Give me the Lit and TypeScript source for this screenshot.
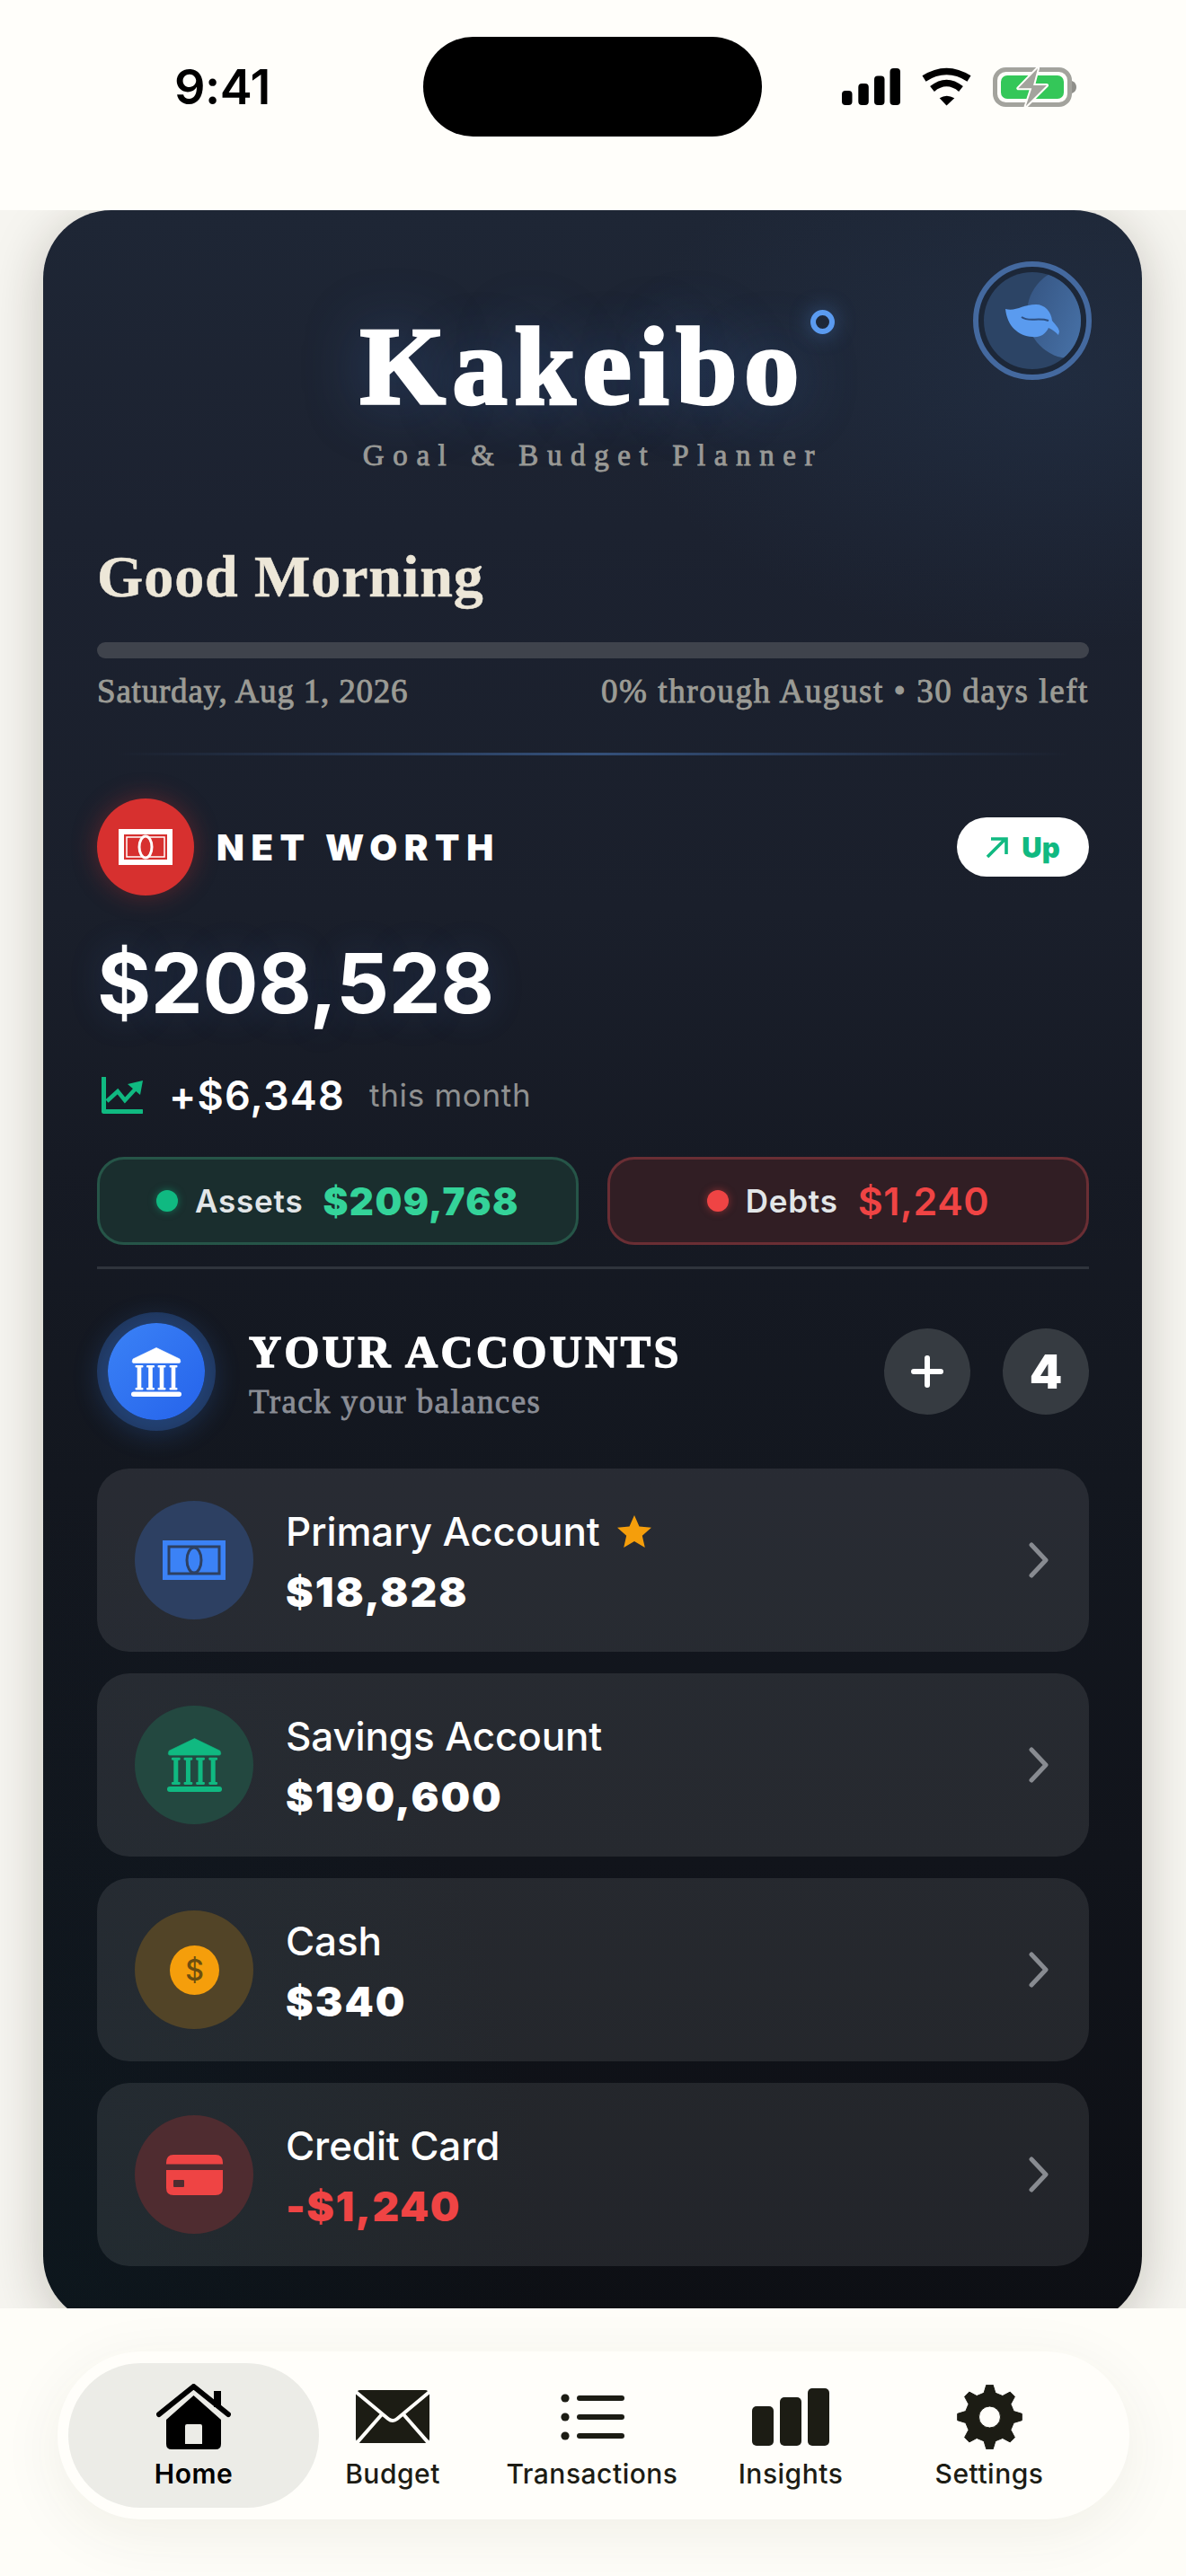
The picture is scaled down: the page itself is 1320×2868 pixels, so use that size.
import { LitElement, html, css, svg } from "lit";
import { customElement } from "lit/decorators.js";

function gearPath(): string {
  const cx = 36.5, cy = 36, teeth = 8, ro = 36, ri = 27.5;
  const pts: string[] = [];
  for (let k = 0; k < teeth; k++) {
    const a = (k * 2 * Math.PI) / teeth - Math.PI / 2;
    const step = (2 * Math.PI) / teeth;
    const seq: [number, number][] = [
      [a - step * 0.3, ri],
      [a - step * 0.13, ro],
      [a + step * 0.13, ro],
      [a + step * 0.3, ri],
    ];
    for (const [t, r] of seq) {
      pts.push(`${(cx + r * Math.cos(t)).toFixed(2)} ${(cy + r * Math.sin(t)).toFixed(2)}`);
    }
  }
  return `M${pts.join("L")}Z M${cx - 12} ${cy}a12 12 0 1 0 24 0a12 12 0 1 0 -24 0Z`;
}

const bank = (w: number, h: number) => html`<svg class="bank" width=${w} height=${h} viewBox="0 0 56 55" fill="currentColor">
  <path d="M28 0.5 L54 13 Q56 17.5 53 17.5 H3 Q0 17.5 2 13 Z" stroke="currentColor" stroke-width="0.6" stroke-linejoin="round"/>
  ${[5, 17.5, 30, 43].map(
    (x) => svg`<rect x=${x - 0.5} y="20" width="9" height="2.6" rx="1"/><rect x=${x + 1.7} y="21.5" width="4.6" height="25"/><rect x=${x - 0.5} y="45" width="9" height="2.6" rx="1"/>`
  )}
  <rect x="0" y="49.5" width="56" height="5.5" rx="2.75"/>
</svg>`;

const note = (cls: string) => html`<svg class="note ${cls}" width="70" height="44" viewBox="0 0 70 44">
  <rect class="n-a" width="70" height="44"/>
  <rect class="n-b" x="7" y="7" width="56" height="30" fill="none" stroke-width="3"/>
  <ellipse class="n-b" cx="35" cy="22" rx="8" ry="14" fill="none" stroke-width="3"/>
</svg>`;

const coin = html`<svg width="55" height="55" viewBox="0 0 55 55">
  <circle cx="27.5" cy="27.5" r="27.5" fill="#f59e0b"/>
  <text x="27.5" y="38.5" text-anchor="middle" class="coin-t">$</text>
</svg>`;

const cardIcon = html`<svg width="63" height="45" viewBox="0 0 63 45" fill="#ef4444">
  <path d="M0 9 Q0 0 8 0 H55 Q63 0 63 9 V10.5 H0Z"/>
  <path fill-rule="evenodd" d="M0 17 H63 V37 Q63 45 55 45 H8 Q0 45 0 37Z M9 28 Q8 28 8 29 V35 Q8 36 9 36 H19 Q20 36 20 35 V29 Q20 28 19 28Z"/>
</svg>`;

const accounts = [
  { name: "Primary Account", value: "$18,828", tone: "blue", star: true, icon: note("n-blue"), neg: false },
  { name: "Savings Account", value: "$190,600", tone: "green", star: false, icon: bank(61, 60), neg: false },
  { name: "Cash", value: "$340", tone: "amber", star: false, icon: coin, neg: false },
  { name: "Credit Card", value: "-$1,240", tone: "red", star: false, icon: cardIcon, neg: true },
];

const tabs = [
  {
    label: "Home",
    active: true,
    icon: html`<svg width="83" height="73" viewBox="0 0 83 73">
      <path d="M3 34 L41.5 3 L80 34" fill="none" stroke="#000" stroke-width="6" stroke-linecap="round" stroke-linejoin="round"/>
      <rect x="64" y="8" width="8" height="18" fill="#000"/>
      <path fill="#000" fill-rule="evenodd" d="M41.5 13 L72 40 V67 Q72 73 66 73 H17 Q11 73 11 67 V40 Z M34 45 Q32 45 32 47 V67 H51 V47 Q51 45 49 45Z"/>
    </svg>`,
  },
  {
    label: "Budget",
    active: false,
    icon: html`<svg width="82" height="59" viewBox="0 0 82 59">
      <rect width="82" height="59" rx="5" fill="#1c1c14"/>
      <path d="M0 2 L36 32 Q41 36 46 32 L82 2 M1 59 L29 27 M81 59 L53 27" fill="none" stroke="#fffefa" stroke-width="4"/>
    </svg>`,
  },
  {
    label: "Transactions",
    active: false,
    icon: html`<svg width="71" height="52" viewBox="0 0 71 52" fill="#1c1c14">
      ${[5, 26, 47].map(
        (y) => svg`<circle cx="5" cy=${y} r="4.6"/><rect x="18" y=${y - 3} width="53" height="6" rx="3"/>`
      )}
    </svg>`,
  },
  {
    label: "Insights",
    active: false,
    icon: html`<svg width="86" height="64" viewBox="0 0 86 64" fill="#1c1c14">
      <rect x="0" y="20" width="24" height="44" rx="5"/>
      <rect x="31" y="10" width="24" height="54" rx="5"/>
      <rect x="62" y="0" width="24" height="64" rx="5"/>
    </svg>`,
  },
  {
    label: "Settings",
    active: false,
    icon: html`<svg width="73" height="72" viewBox="0 0 73 72"><path d=${gearPath()} fill="#1c1c14" fill-rule="evenodd" stroke="#1c1c14" stroke-width="1" stroke-linejoin="round"/></svg>`,
  },
];

@customElement("app-root")
export class AppRoot extends LitElement {
  static styles = css`
    :host {
      display: block;
      width: 1320px;
      height: 2868px;
      background: #fffefa;
      font-family: Inter, "Liberation Sans", sans-serif;
      overflow: hidden;
    }
    .status {
      height: 234px;
      box-sizing: border-box;
      padding-top: 41px;
      display: grid;
      grid-template-columns: 471px 377px 472px;
      align-items: start;
    }
    .status-l, .status-r { height: 111px; display: flex; align-items: center; }
    .time { padding-left: 194px; font-size: 54px; font-weight: 600; color: #000; letter-spacing: -0.5px; }
    .island { height: 111px; border-radius: 56px; background: #000; }
    .status-r { padding-left: 89px; gap: 23px; }
    .scroll {
      height: 2336px;
      overflow: hidden;
      box-sizing: border-box;
      padding-left: 48px;
      background: #f6f5f0;
    }
    .card {
      position: relative;
      width: 1223px;
      box-sizing: border-box;
      padding: 113px 59px 65px 60px;
      border-radius: 76px;
      color: #fff;
      background:
        radial-gradient(700px 420px at 92% 8%, rgba(50, 85, 130, 0.16), transparent 70%),
        radial-gradient(800px 1300px at 0% 100%, rgba(14, 40, 50, 0.3), transparent 70%),
        linear-gradient(180deg, #1e2635 0%, #1c2230 15%, #1a1f2b 33%, #161a24 45%, #13171f 60%, #11141b 78%, #0d0f14 100%);
      box-shadow: 0 10px 60px rgba(30, 25, 10, 0.22);
    }
    .leaf { position: absolute; left: 1035px; top: 57px; width: 132px; height: 132px; }
    .head { display: flex; flex-direction: column; align-items: center; }
    .title {
      position: relative;
      margin-right: 22px;
      font-family: "Liberation Serif", serif;
      font-weight: 700;
      font-size: 122px;
      line-height: 122px;
      letter-spacing: 8px;
      -webkit-text-stroke: 3.5px #fff;
      text-shadow: 0 0 70px rgba(70, 130, 220, 0.38);
    }
    .ringdot {
      position: absolute;
      right: -32px;
      top: -2px;
      width: 27px;
      height: 27px;
      box-sizing: border-box;
      border: 6px solid #5b9bf0;
      border-radius: 50%;
      box-shadow: 0 0 24px rgba(91, 155, 240, 0.4);
    }
    .sub {
      margin-top: 18px;
      font-family: "Liberation Serif", serif;
      font-size: 33px;
      line-height: 40px;
      font-weight: 400;
      -webkit-text-stroke: 0.9px #9a9a96;
      letter-spacing: 9.6px;
      color: #9a9a96;
    }
    .greet {
      margin-top: 75px;
      font-family: "Liberation Serif", serif;
      font-size: 66px;
      line-height: 80px;
      font-weight: 700;
      letter-spacing: 0.9px;
      -webkit-text-stroke: 0.5px #ede7d8;
      color: #ede7d8;
    }
    .bar { margin-top: 33px; height: 18px; border-radius: 9px; background: #3f434c; }
    .daterow {
      margin-top: 15px;
      display: flex;
      justify-content: space-between;
      font-family: "Liberation Serif", serif;
      font-size: 37px;
      line-height: 44px;
      font-weight: 400;
      -webkit-text-stroke: 0.9px #9b9b95;
      color: #9b9b95;
    }
    .d-l { letter-spacing: 0.8px; }
    .d-r { letter-spacing: 1.6px; }
    .fade {
      margin: 46px 0 0;
      height: 3px;
      background: linear-gradient(90deg, transparent 2%, #34507a 50%, transparent 98%);
    }
    .nw { margin-top: 48px; height: 108px; display: flex; align-items: center; }
    .nw-badge {
      width: 108px;
      height: 108px;
      border-radius: 50%;
      background: #d7302f;
      box-shadow: 0 0 28px rgba(215, 48, 47, 0.35);
      display: flex;
      align-items: center;
      justify-content: center;
      flex: none;
    }
    .nw-label {
      margin-left: 25px;
      font-size: 40px;
      font-weight: 900;
      letter-spacing: 7.6px;
      color: #fff;
      flex: 1;
    }
    .up {
      width: 147px;
      height: 66px;
      border-radius: 33px;
      background: #fff;
      display: flex;
      align-items: center;
      justify-content: center;
      gap: 15px;
      color: #10b981;
      font-size: 31px;
      font-weight: 900;
    }
    .amount {
      margin-top: 48px;
      font-size: 92px;
      line-height: 100px;
      font-weight: 700;
      letter-spacing: -0.4px;
      text-shadow: 0 0 40px rgba(70, 130, 220, 0.18);
    }
    .trend { margin-top: 52px; height: 44px; display: flex; align-items: center; padding-left: 5px; }
    .trend-v { margin-left: 29px; font-size: 45px; font-weight: 600; letter-spacing: 1.2px; }
    .trend-s { margin-left: 27px; font-size: 35px; color: #8f9090; letter-spacing: 0.7px; }
    .pills { margin-top: 47px; display: grid; grid-template-columns: 536px 536px; gap: 32px; }
    .pill {
      height: 98px;
      box-sizing: border-box;
      border-radius: 30px;
      border: 3px solid;
      display: flex;
      align-items: center;
      justify-content: center;
    }
    .pill.g { background: #1a2e2e; border-color: #265548; }
    .pill.r { background: #311e24; border-color: #6a2e34; }
    .dot { width: 24px; height: 24px; border-radius: 50%; }
    .g .dot { background: #10b981; box-shadow: 0 0 8px rgba(16, 185, 129, 0.5); }
    .r .dot { background: #ef4444; box-shadow: 0 0 8px rgba(239, 68, 68, 0.5); }
    .pill-l { margin-left: 19px; font-size: 35px; font-weight: 600; color: #e2e6e8; letter-spacing: 0.8px; }
    .pill-v { margin-left: 22px; }
    .g .pill-v { color: #34d399; font-size: 42px; font-weight: 900; letter-spacing: 1.4px; }
    .r .pill-v { color: #ef4444; font-size: 43px; font-weight: 600; letter-spacing: 0.6px; }
    .rule { margin-top: 24px; height: 3px; background: #2f343c; }
    .ah { margin-top: 48px; height: 132px; display: flex; align-items: center; }
    .ah-ic {
      width: 108px;
      height: 108px;
      margin: 12px;
      flex: none;
      border-radius: 50%;
      background: linear-gradient(135deg, #3b82f6, #2563eb);
      box-shadow: 0 0 0 12px rgba(59, 130, 246, 0.25), 0 6px 30px 10px rgba(59, 130, 246, 0.22);
      display: flex;
      align-items: center;
      justify-content: center;
      color: #fff;
    }
    .ah-t { margin-left: 37px; flex: 1; padding-top: 3px; }
    .ah-1 {
      font-family: "Liberation Serif", serif;
      font-size: 50px;
      line-height: 56px;
      font-weight: 700;
      letter-spacing: 3.4px;
      -webkit-text-stroke: 1.5px #fff;
    }
    .ah-2 {
      margin-top: 8px;
      font-family: "Liberation Serif", serif;
      font-size: 37px;
      line-height: 40px;
      font-weight: 400;
      -webkit-text-stroke: 0.8px #8a8d95;
      letter-spacing: 1.4px;
      color: #8a8d95;
    }
    .round {
      width: 96px;
      height: 96px;
      border-radius: 50%;
      background: #363b41;
      display: flex;
      align-items: center;
      justify-content: center;
      font-size: 52px;
      font-weight: 900;
    }
    .round + .round { margin-left: 36px; }
    .rows { margin-top: 42px; display: flex; flex-direction: column; gap: 24px; }
    .row {
      height: 204px;
      box-sizing: border-box;
      padding: 0 44px 0 42px;
      border-radius: 36px;
      background: rgba(255, 255, 255, 0.09);
      display: flex;
      align-items: center;
    }
    .ric {
      width: 132px;
      height: 132px;
      border-radius: 50%;
      flex: none;
      display: flex;
      align-items: center;
      justify-content: center;
    }
    .ric.blue { background: #2d4062; }
    .ric.green { background: #234840; color: #10b981; }
    .ric.amber { background: #524427; }
    .ric.red { background: #4f2c30; }
    .rt { margin-left: 36px; flex: 1; padding-top: 3px; }
    .rn { font-size: 44px; line-height: 56px; font-weight: 500; display: flex; align-items: center; gap: 19px; letter-spacing: -0.15px; }
    .rv { margin-top: 11px; font-size: 46px; line-height: 56px; font-weight: 900; letter-spacing: 2px; }
    .rv.neg { color: #ef4444; letter-spacing: 1.5px; }
    .note .n-a { fill: #3b82f6; }
    .note .n-b { stroke: #2d4062; }
    .coin-t { font-family: Inter, sans-serif; font-size: 32px; font-weight: 500; fill: #6b4e10; }
    .bottom { height: 298px; box-sizing: border-box; padding: 48px 63px 0 64px; background: #fefdf8; }
    .nav {
      height: 187px;
      box-sizing: border-box;
      padding: 13px 12px;
      border-radius: 94px;
      background: #fffefa;
      box-shadow: 0 16px 70px rgba(60, 50, 20, 0.07);
      display: grid;
      grid-template-columns: 279px 164px 280px 162px 280px;
      color: #1c1c14;
    }
    .tab {
      height: 161px;
      box-sizing: border-box;
      padding-top: 23px;
      border-radius: 81px;
      display: flex;
      flex-direction: column;
      align-items: center;
    }
    .tab.on { background: #ecece7; color: #000; }
    .tab-i { height: 73px; display: flex; align-items: center; }
    .tab-l { margin-top: 9px; font-size: 30px; line-height: 36px; font-weight: 500; letter-spacing: 0.5px; white-space: nowrap; }
    .tab.on .tab-l { font-weight: 600; }
  `;

  render() {
    return html`
      <div class="status">
        <div class="status-l"><span class="time">9:41</span></div>
        <div class="island"></div>
        <div class="status-r">
          <svg width="65" height="41" viewBox="0 0 65 41" fill="#000">
            <rect x="0" y="25" width="11.5" height="16" rx="4"/>
            <rect x="18.3" y="17" width="11.5" height="24" rx="4"/>
            <rect x="36" y="8.5" width="11.5" height="32.5" rx="4"/>
            <rect x="53.5" y="0" width="11.5" height="41" rx="4"/>
          </svg>
          <svg width="57" height="43" viewBox="0 0 57 43">
            <path d="M3.5 12.5 Q28.5 -3.5 53.5 12.5 M12.5 24 Q28.5 11 44.5 24" fill="none" stroke="#000" stroke-width="7.5"/>
            <path d="M20.7 34.3 Q28.5 29 37.3 34.3 L28.5 42.5Z" fill="#000"/>
          </svg>
          <svg width="93" height="44" viewBox="0 0 93 44">
            <rect x="2.5" y="2.5" width="83" height="39" rx="12" fill="none" stroke="#a3a39d" stroke-width="5"/>
            <rect x="9" y="9" width="70" height="26" rx="7" fill="#34c759"/>
            <path d="M88 15 Q93 17 93 22 Q93 27 88 29Z" fill="#8f8f8a"/>
            <path d="M50 1 L28.3 23.3 H43.3 L36.7 43.3 L60 20 H45Z" fill="#a3a39d" stroke="#fffefa" stroke-width="4" paint-order="stroke" stroke-linejoin="round"/>
          </svg>
        </div>
      </div>
      <div class="scroll">
        <div class="card">
          <svg class="leaf" viewBox="0 0 132 132">
            <defs>
              <clipPath id="disc"><circle cx="66" cy="66" r="54"/></clipPath>
              <linearGradient id="cres" x1="0" y1="0" x2="1" y2="0.4">
                <stop offset="0" stop-color="#345380"/>
                <stop offset="1" stop-color="#4a76ad"/>
              </linearGradient>
            </defs>
            <circle cx="66" cy="66" r="63" fill="#1c2738" stroke="#44699f" stroke-width="6"/>
            <circle cx="66" cy="66" r="54" fill="#2c4465"/>
            <ellipse cx="108" cy="58" rx="48" ry="50" fill="url(#cres)" clip-path="url(#disc)"/>
            <path d="M36 53 C48 56 55 48 70 48 C80 48 87 56 88 66 C91 70 95 73 96 78 L95 82 C92 79 89 76 84 74 C80 82 74 85 66 84 C50 83 38 72 36 53Z" fill="#5a9bef"/>
            <path d="M54 62 C62 68 72 62 84 66" fill="none" stroke="#2f5080" stroke-width="2"/>
          </svg>
          <div class="head">
            <div class="title">Kakeibo<span class="ringdot"></span></div>
            <div class="sub">Goal &amp; Budget Planner</div>
          </div>
          <div class="greet">Good Morning</div>
          <div class="bar"></div>
          <div class="daterow"><span class="d-l">Saturday, Aug 1, 2026</span><span class="d-r">0% through August • 30 days left</span></div>
          <div class="fade"></div>
          <div class="nw">
            <div class="nw-badge">
              <svg width="60" height="40" viewBox="0 0 60 40">
                <rect width="60" height="40" fill="#fff"/>
                <rect x="6" y="6" width="48" height="28" fill="#d7302f"/>
                <rect x="9" y="9" width="42" height="22" fill="none" stroke="#fff" stroke-width="1.5"/>
                <ellipse cx="30" cy="20" rx="7" ry="12" fill="#d7302f" stroke="#fff" stroke-width="3"/>
              </svg>
            </div>
            <div class="nw-label">NET WORTH</div>
            <div class="up">
              <svg width="25" height="23" viewBox="0 0 25 23" fill="none" stroke="#10b981" stroke-width="3.6">
                <path d="M2 22 L22 2 M6 2 H23 V19"/>
              </svg>
              <span>Up</span>
            </div>
          </div>
          <div class="amount">$208,528</div>
          <div class="trend">
            <svg width="46" height="41" viewBox="0 0 46 41" fill="none" stroke="#10b981">
              <path d="M2.5 1 V38.5 H45" stroke-width="5" stroke-linecap="round" stroke-linejoin="round"/>
              <path d="M6 27 L18 16 L26 26 L38 13" stroke-width="4.5"/>
              <path d="M29 8 L46 4 L43 20Z" fill="#10b981" stroke="none"/>
            </svg>
            <span class="trend-v">+$6,348</span>
            <span class="trend-s">this month</span>
          </div>
          <div class="pills">
            <div class="pill g"><span class="dot"></span><span class="pill-l">Assets</span><span class="pill-v">$209,768</span></div>
            <div class="pill r"><span class="dot"></span><span class="pill-l">Debts</span><span class="pill-v">$1,240</span></div>
          </div>
          <div class="rule"></div>
          <div class="ah">
            <div class="ah-ic">${bank(56, 55)}</div>
            <div class="ah-t">
              <div class="ah-1">YOUR ACCOUNTS</div>
              <div class="ah-2">Track your balances</div>
            </div>
            <div class="round">
              <svg width="36" height="36" viewBox="0 0 36 36" stroke="#fff" stroke-width="6" stroke-linecap="round"><path d="M18 3 V33 M3 18 H33"/></svg>
            </div>
            <div class="round">4</div>
          </div>
          <div class="rows">
            ${accounts.map(
              (a) => html`<div class="row">
                <div class="ric ${a.tone}">${a.icon}</div>
                <div class="rt">
                  <div class="rn">
                    <span>${a.name}</span>
                    ${a.star
                      ? html`<svg width="38" height="36" viewBox="0 0 38 36" fill="#f59e0b"><path d="M19 0 L24.5 12.5 L38 13.7 L27.8 22.7 L30.8 36 L19 29 L7.2 36 L10.2 22.7 L0 13.7 L13.5 12.5Z"/></svg>`
                      : ""}
                  </div>
                  <div class="rv ${a.neg ? "neg" : ""}">${a.value}</div>
                </div>
                <svg width="24" height="40" viewBox="0 0 24 40" fill="none" stroke="#888b91" stroke-width="5" stroke-linecap="round" stroke-linejoin="round"><path d="M4 3 L20 20 L4 37"/></svg>
              </div>`
            )}
          </div>
        </div>
      </div>
      <div class="bottom">
        <div class="nav">
          ${tabs.map(
            (t) => html`<div class="tab ${t.active ? "on" : ""}">
              <div class="tab-i">${t.icon}</div>
              <div class="tab-l">${t.label}</div>
            </div>`
          )}
        </div>
      </div>
    `;
  }
}
